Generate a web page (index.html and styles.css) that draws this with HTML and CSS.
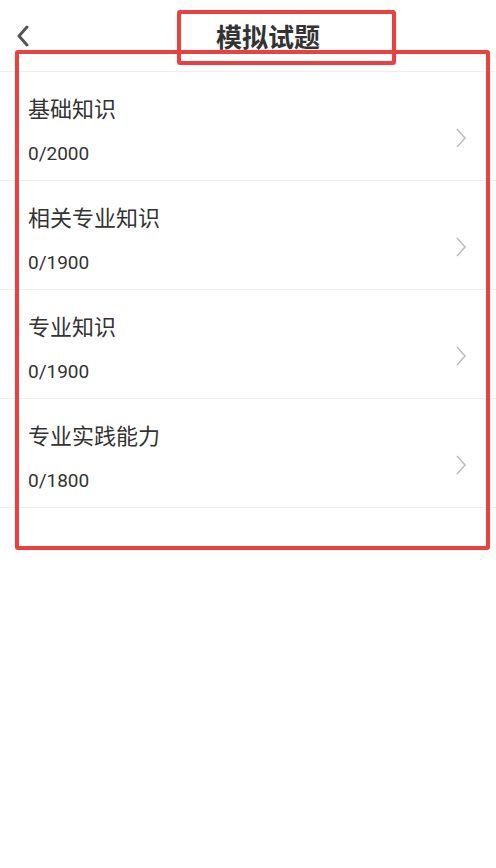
FILE: index.html
```html
<!DOCTYPE html>
<html lang="zh-CN">
<head>
  <meta charset="UTF-8" />
  <meta name="viewport" content="width=device-width, initial-scale=1.0" />
  <title>模拟试题</title>
  <link rel="stylesheet" href="styles.css">
</head>
<body>
  <div class="page">
    <header class="topbar">
      <a class="back" href="#">
        <svg width="14" height="22" viewBox="0 0 14 22">
          <polyline points="11,2 3,11 11,20" fill="none" stroke="#555" stroke-width="3" stroke-linecap="round" stroke-linejoin="round" />
        </svg>
      </a>
      <h1 class="title">模拟试题</h1>
    </header>

    <ul class="list">
      <li class="item">
        <div class="info">
          <div class="name">基础知识</div>
          <div class="count">0/2000</div>
        </div>
        <svg class="arrow" width="12" height="20" viewBox="0 0 12 20"><polyline points="2,1 10,10 2,19" fill="none" stroke="#bbb" stroke-width="1.5" /></svg>
      </li>
      <li class="item">
        <div class="info">
          <div class="name">相关专业知识</div>
          <div class="count">0/1900</div>
        </div>
        <svg class="arrow" width="12" height="20" viewBox="0 0 12 20"><polyline points="2,1 10,10 2,19" fill="none" stroke="#bbb" stroke-width="1.5" /></svg>
      </li>
      <li class="item">
        <div class="info">
          <div class="name">专业知识</div>
          <div class="count">0/1900</div>
        </div>
        <svg class="arrow" width="12" height="20" viewBox="0 0 12 20"><polyline points="2,1 10,10 2,19" fill="none" stroke="#bbb" stroke-width="1.5" /></svg>
      </li>
      <li class="item">
        <div class="info">
          <div class="name">专业实践能力</div>
          <div class="count">0/1800</div>
        </div>
        <svg class="arrow" width="12" height="20" viewBox="0 0 12 20"><polyline points="2,1 10,10 2,19" fill="none" stroke="#bbb" stroke-width="1.5" /></svg>
      </li>
    </ul>

    <!-- 标注框 -->
    <div class="mark mark-title"></div>
    <div class="mark mark-list"></div>
  </div>
</body>
</html>
```

FILE: styles.css
```css
* { box-sizing: border-box; }
body { margin: 0; background: #fff; color: #333; font-family: Roboto, "Noto Sans CJK SC", sans-serif; }
.page { position: relative; width: 496px; min-height: 868px; }

.topbar { display: flex; align-items: center; height: 72px; padding-left: 16px; border-bottom: 1px solid #eee; }
.back { display: flex; }
.title { margin: 0 0 0 186px; font-size: 26px; font-weight: bold; line-height: 36px; color: #333; font-family: "Noto Sans CJK SC", sans-serif; }

.list { list-style: none; margin: 0; padding: 0; }
.item { display: flex; align-items: center; height: 109px; padding: 0 28px; border-bottom: 1px solid #eee; }
.info { flex: 1; padding-top: 23px; padding-bottom: 14px; }
.name { font-size: 22px; line-height: 30px; color: #333; }
.count { margin-top: 17px; font-size: 19px; line-height: 24px; color: #333; }
.arrow { margin-top: 24px; margin-right: 1px; }

.mark { position: absolute; border: 4px solid #ea4040; border-radius: 3px; }
.mark-title { left: 177px; top: 10px; width: 219px; height: 55px; }
.mark-list { left: 15px; top: 50px; width: 475px; height: 500px; }
```
